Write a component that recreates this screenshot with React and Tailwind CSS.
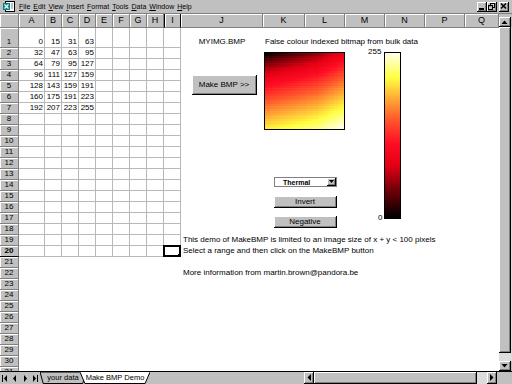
import React from 'react'

const FONT = 'font-[family-name:Liberation_Sans,Arial,sans-serif]'

const COLS = [
  { k: 'A', w: 'w-[26px]', grid: true },
  { k: 'B', w: 'w-[17px]', grid: true },
  { k: 'C', w: 'w-[17px]', grid: true },
  { k: 'D', w: 'w-[17px]', grid: true },
  { k: 'E', w: 'w-[17px]', grid: true },
  { k: 'F', w: 'w-[17px]', grid: true },
  { k: 'G', w: 'w-[17px]', grid: true },
  { k: 'H', w: 'w-[17px]', grid: true },
  { k: 'I', w: 'w-[17px]', grid: true },
  { k: 'J', w: 'w-[82px]' },
  { k: 'K', w: 'w-[42px]' },
  { k: 'L', w: 'w-[40px]' },
  { k: 'M', w: 'w-[40px]' },
  { k: 'N', w: 'w-[40px]' },
  { k: 'P', w: 'w-[40px]' },
  { k: 'Q', w: 'w-[34px]' },
]

const DATA = [
  [0, 15, 31, 63],
  [32, 47, 63, 95],
  [64, 79, 95, 127],
  [96, 111, 127, 159],
  [128, 143, 159, 191],
  [160, 175, 191, 223],
  [192, 207, 223, 255],
]

const ROWS = Array.from({ length: 31 }, (_, i) => i + 1)

// text that sits in cells of column J / K
const TEXT = {
  '1J': { t: 'MYIMG.BMP', center: true },
  '1K': { t: 'False colour indexed bitmap from bulk data' },
  '19J': { t: 'This demo of MakeBMP is limited to an image size of x + y < 100 pixels' },
  '20J': { t: 'Select a range and then click on the MakeBMP button' },
  '22J': { t: 'More information from  martin.brown@pandora.be' },
}

// thermal colour map, 0..1
const STOPS = [
  [0, [0, 0, 0]],
  [0.18, [120, 0, 8]],
  [0.32, [228, 0, 20]],
  [0.45, [255, 12, 36]],
  [0.6, [255, 90, 44]],
  [0.72, [255, 168, 52]],
  [0.85, [255, 255, 64]],
  [1, [255, 255, 232]],
]

function thermal(v) {
  for (let i = 1; i < STOPS.length; i++) {
    const [p1, c1] = STOPS[i]
    const [p0, c0] = STOPS[i - 1]
    if (v <= p1) {
      const f = (v - p0) / (p1 - p0)
      const c = c0.map((x, j) => Math.round(x + (c1[j] - x) * f))
      return `rgb(${c[0]},${c[1]},${c[2]})`
    }
  }
  return 'rgb(255,255,232)'
}

function sample(y, x) {
  const r0 = Math.min(5, Math.floor(y))
  const c0 = Math.min(2, Math.floor(x))
  const fy = y - r0
  const fx = x - c0
  const a = DATA[r0][c0]
  const b = DATA[r0][c0 + 1]
  const c = DATA[r0 + 1][c0]
  const d = DATA[r0 + 1][c0 + 1]
  return a * (1 - fx) * (1 - fy) + b * fx * (1 - fy) + c * (1 - fx) * fy + d * fx * fy
}

function Heatmap() {
  const W = 32
  const H = 30
  const cells = []
  for (let j = 0; j < H; j++) {
    for (let i = 0; i < W; i++) {
      const v = Math.pow(sample((j / (H - 1)) * 6, (i / (W - 1)) * 3) / 255, 0.72)
      cells.push(<rect key={j * W + i} x={i} y={j} width="1.05" height="1.05" fill={thermal(v)} />)
    }
  }
  return (
    <svg viewBox={`0 0 ${W} ${H}`} preserveAspectRatio="none" className="block h-full w-full" shapeRendering="crispEdges">
      {cells}
    </svg>
  )
}

function ColourBar() {
  return (
    <svg viewBox="0 0 10 100" preserveAspectRatio="none" className="block h-full w-full">
      <defs>
        <linearGradient id="thermal" x1="0" y1="1" x2="0" y2="0">
          {STOPS.map(([p, c]) => (
            <stop key={p} offset={p} stopColor={`rgb(${c[0]},${c[1]},${c[2]})`} />
          ))}
        </linearGradient>
      </defs>
      <rect x="0" y="0" width="10" height="100" fill="url(#thermal)" />
    </svg>
  )
}

function Tri({ dir, bar }) {
  return (
    <svg width="8" height="7" viewBox="0 0 8 7">
      {dir === 'left' ? (
        <>
          {bar && <rect x="1" y="0" width="1" height="7" fill="#000" />}
          <polygon points={bar ? '6,0 6,7 3,3.5' : '5,0 5,7 2,3.5'} fill="#000" />
        </>
      ) : (
        <>
          {bar && <rect x="6" y="0" width="1" height="7" fill="#000" />}
          <polygon points={bar ? '2,0 2,7 5,3.5' : '3,0 3,7 6,3.5'} fill="#000" />
        </>
      )}
    </svg>
  )
}

function Bevel({ className = '', children }) {
  return (
    <div
      className={`flex items-center justify-center bg-[#c0c0c0] border-r border-b border-black shadow-[inset_1px_1px_0_#fff,inset_-1px_-1px_0_#808080] ${className}`}
    >
      {children}
    </div>
  )
}

function MenuBar() {
  const items = [
    ['F', 'ile'],
    ['E', 'dit'],
    ['V', 'iew'],
    ['I', 'nsert'],
    ['F', 'ormat'],
    ['T', 'ools'],
    ['D', 'ata'],
    ['W', 'indow'],
    ['H', 'elp'],
  ]
  return (
    <div className="flex h-[14px] shrink-0 items-center border-b border-[#808080] bg-[#c0c0c0] pl-[3px] pr-[3px]">
      <svg width="13" height="11" viewBox="0 0 13 11" className="mr-[3px]">
        <rect x="2.5" y="0.5" width="9" height="10" fill="#fff" stroke="#000" />
        <rect x="0" y="2" width="7" height="7" fill="#008080" />
        <path d="M1.5 3.5 L5.5 7.5 M5.5 3.5 L1.5 7.5" stroke="#fff" strokeWidth="1.3" />
        <path d="M8 3 H10 M8 5 H10 M8 7 H10" stroke="#808080" />
      </svg>
      <div className="flex gap-[3px] text-[7px] leading-none text-black">
        {items.map(([u, rest], i) => (
          <span key={i}>
            <span className="underline">{u}</span>
            {rest}
          </span>
        ))}
      </div>
      <div className="ml-auto flex items-center">
        <Bevel className="h-[10px] w-[10px]">
          <div className="mt-[5px] h-[2px] w-[5px] bg-black" />
        </Bevel>
        <Bevel className="h-[10px] w-[10px]">
          <svg width="7" height="7" viewBox="0 0 7 7">
            <rect x="2.5" y="0.5" width="4" height="4" fill="none" stroke="#000" />
            <rect x="0.5" y="2.5" width="4" height="4" fill="#c0c0c0" stroke="#000" />
            <rect x="0" y="2" width="5" height="1.2" fill="#000" />
          </svg>
        </Bevel>
        <Bevel className="ml-[2px] h-[10px] w-[10px]">
          <svg width="7" height="6" viewBox="0 0 7 6">
            <path d="M1 0.5 L6 5.5 M6 0.5 L1 5.5" stroke="#000" strokeWidth="1.5" />
          </svg>
        </Bevel>
      </div>
    </div>
  )
}

const HEAD = 'shrink-0 flex border-r border-b border-[#808080] bg-[#c0c0c0] shadow-[inset_1px_1px_0_#fff]'

function ColumnHeader() {
  return (
    <div className="flex h-[14px] shrink-0">
      <div className={`w-[19px] ${HEAD}`} />
      {COLS.map((c) => (
        <div
          key={c.k}
          className={`${c.w} ${HEAD} items-center justify-center text-[9px] leading-none ${
            c.k === 'I' ? 'border-l border-l-black border-r-black' : ''
          }`}
        >
          {c.k}
        </div>
      ))}
    </div>
  )
}

function Row({ r }) {
  return (
    <div className={`flex shrink-0 ${r === 1 ? 'h-[20px]' : 'h-[11px]'}`}>
      <div
        className={`w-[19px] ${HEAD} items-end justify-center pb-[1px] text-[8px] leading-none ${
          r === 20 ? 'font-bold border-b-black' : ''
        }`}
      >
        {r}
      </div>
      {COLS.map((c, ci) => {
        const gridded = c.grid && r <= 20
        const num = r <= 7 && ci < 4 ? DATA[r - 1][ci] : null
        const txt = TEXT[`${r}${c.k}`]
        const sel = r === 20 && c.k === 'I'
        return (
          <div
            key={c.k}
            className={`relative ${c.w} shrink-0 flex items-end pb-[1px] text-[8px] leading-none whitespace-nowrap ${
              gridded ? 'border-r border-b border-[#b8b8b8]' : ''
            } ${num !== null ? 'justify-end pr-[1px]' : ''} ${txt && txt.center ? 'justify-center' : 'pl-[2px]'}`}
          >
            {num !== null && num}
            {txt && <span className="pb-[1px]">{txt.t}</span>}
            {sel && (
              <div className="absolute -left-[1px] -top-[1px] h-[12px] w-[18px] border-2 border-black">
                <div className="absolute -bottom-[2px] -right-[2px] h-[3px] w-[3px] bg-black" />
              </div>
            )}
          </div>
        )
      })}
    </div>
  )
}

function VScroll() {
  return (
    <div className="flex w-[13px] shrink-0 flex-col bg-[#c0c0c0] pt-[3px]">
      <Bevel className="h-[10px] w-[12px] shrink-0">
        <svg width="7" height="4" viewBox="0 0 7 4">
          <polygon points="0.5,4 6.5,4 3.5,0.5" fill="#000" />
        </svg>
      </Bevel>
      <div className="flex flex-1 flex-col bg-[#dcdcdc]">
        <Bevel className="h-[326px] w-[12px] shrink-0" />
      </div>
      <Bevel className="h-[10px] w-[12px] shrink-0">
        <svg width="7" height="4" viewBox="0 0 7 4">
          <polygon points="0.5,0 6.5,0 3.5,3.5" fill="#000" />
        </svg>
      </Bevel>
    </div>
  )
}

function Tab({ label, active, w }) {
  return (
    <div className={`relative flex h-[12px] shrink-0 items-center justify-center ${w} ${active ? '-ml-[6px]' : ''}`}>
      <svg className="absolute inset-0 h-full w-full" viewBox="0 0 100 12" preserveAspectRatio="none">
        <polygon points="0,0 100,0 93,11.5 7,11.5" fill={active ? '#fff' : '#c0c0c0'} stroke="#000" strokeWidth="1" vectorEffect="non-scaling-stroke" />
        {active && <line x1="1" y1="0.2" x2="99" y2="0.2" stroke="#fff" strokeWidth="1.5" vectorEffect="non-scaling-stroke" />}
      </svg>
      <span className="relative text-[7.5px] leading-none">{label}</span>
    </div>
  )
}

function TabBar() {
  return (
    <div className="flex h-[13px] shrink-0 items-start border-t border-black bg-[#c0c0c0]">
      <div className="flex h-[12px] w-[40px] shrink-0 items-center">
        <div className="flex w-[10px] justify-center"><Tri dir="left" bar /></div>
        <div className="flex w-[10px] justify-center"><Tri dir="left" /></div>
        <div className="flex w-[10px] justify-center"><Tri dir="right" /></div>
        <div className="flex w-[10px] justify-center"><Tri dir="right" bar /></div>
      </div>
      <Tab label="your data" w="w-[46px]" />
      <Tab label="Make BMP Demo" w="w-[70px]" active />
      <div className="flex-1" />
      <div className="flex h-[12px] w-[193px] shrink-0">
        <Bevel className="h-[12px] w-[10px] shrink-0">
          <svg width="4" height="7" viewBox="0 0 4 7">
            <polygon points="4,0 4,7 0.5,3.5" fill="#000" />
          </svg>
        </Bevel>
        <div className="flex flex-1 bg-[#dcdcdc]">
          <Bevel className="h-[12px] w-[163px] shrink-0" />
        </div>
        <Bevel className="h-[12px] w-[10px] shrink-0">
          <svg width="4" height="7" viewBox="0 0 4 7">
            <polygon points="0,0 0,7 3.5,3.5" fill="#000" />
          </svg>
        </Bevel>
      </div>
      <div className="w-[15px] shrink-0" />
    </div>
  )
}

export default function App() {
  return (
    <div className={`relative flex h-[384px] w-[512px] flex-col overflow-hidden bg-white text-black ${FONT}`}>
      <MenuBar />
      <div className="flex min-h-0 flex-1">
        <div className="flex w-[499px] shrink-0 flex-col overflow-hidden bg-white">
          <ColumnHeader />
          {ROWS.map((r) => (
            <Row key={r} r={r} />
          ))}
        </div>
        <VScroll />
      </div>
      <TabBar />

      {/* floating sheet objects */}
      <Bevel className="absolute left-[192px] top-[75px] h-[20px] w-[65px] text-[8px] leading-none shadow-[inset_1px_1px_0_#fff,inset_-1px_-1px_0_#808080,1px_1px_0_#000]">
        Make BMP &gt;&gt;
      </Bevel>
      <div className="absolute left-[264px] top-[52px] h-[78px] w-[81px] border border-black">
        <Heatmap />
      </div>
      <div className="absolute left-[384px] top-[52px] h-[167px] w-[17px] border border-black">
        <ColourBar />
      </div>
      <div className="absolute left-[368px] top-[48px] text-[8px] leading-none">255</div>
      <div className="absolute left-[378px] top-[214px] text-[8px] leading-none">0</div>

      <div className="absolute left-[274px] top-[177px] flex h-[10px] w-[63px] items-center border border-[#808080] bg-white">
        <span className="flex-1 pl-[8px] text-[7px] font-bold leading-none">Thermal</span>
        <Bevel className="h-[8px] w-[9px]">
          <svg width="5" height="3" viewBox="0 0 5 3">
            <polygon points="0,0 5,0 2.5,3" fill="#000" />
          </svg>
        </Bevel>
      </div>
      <Bevel className="absolute left-[274px] top-[196px] h-[12px] w-[63px] text-[8px] leading-none">Invert</Bevel>
      <Bevel className="absolute left-[274px] top-[216px] h-[12px] w-[63px] text-[8px] leading-none">Negative</Bevel>
    </div>
  )
}
